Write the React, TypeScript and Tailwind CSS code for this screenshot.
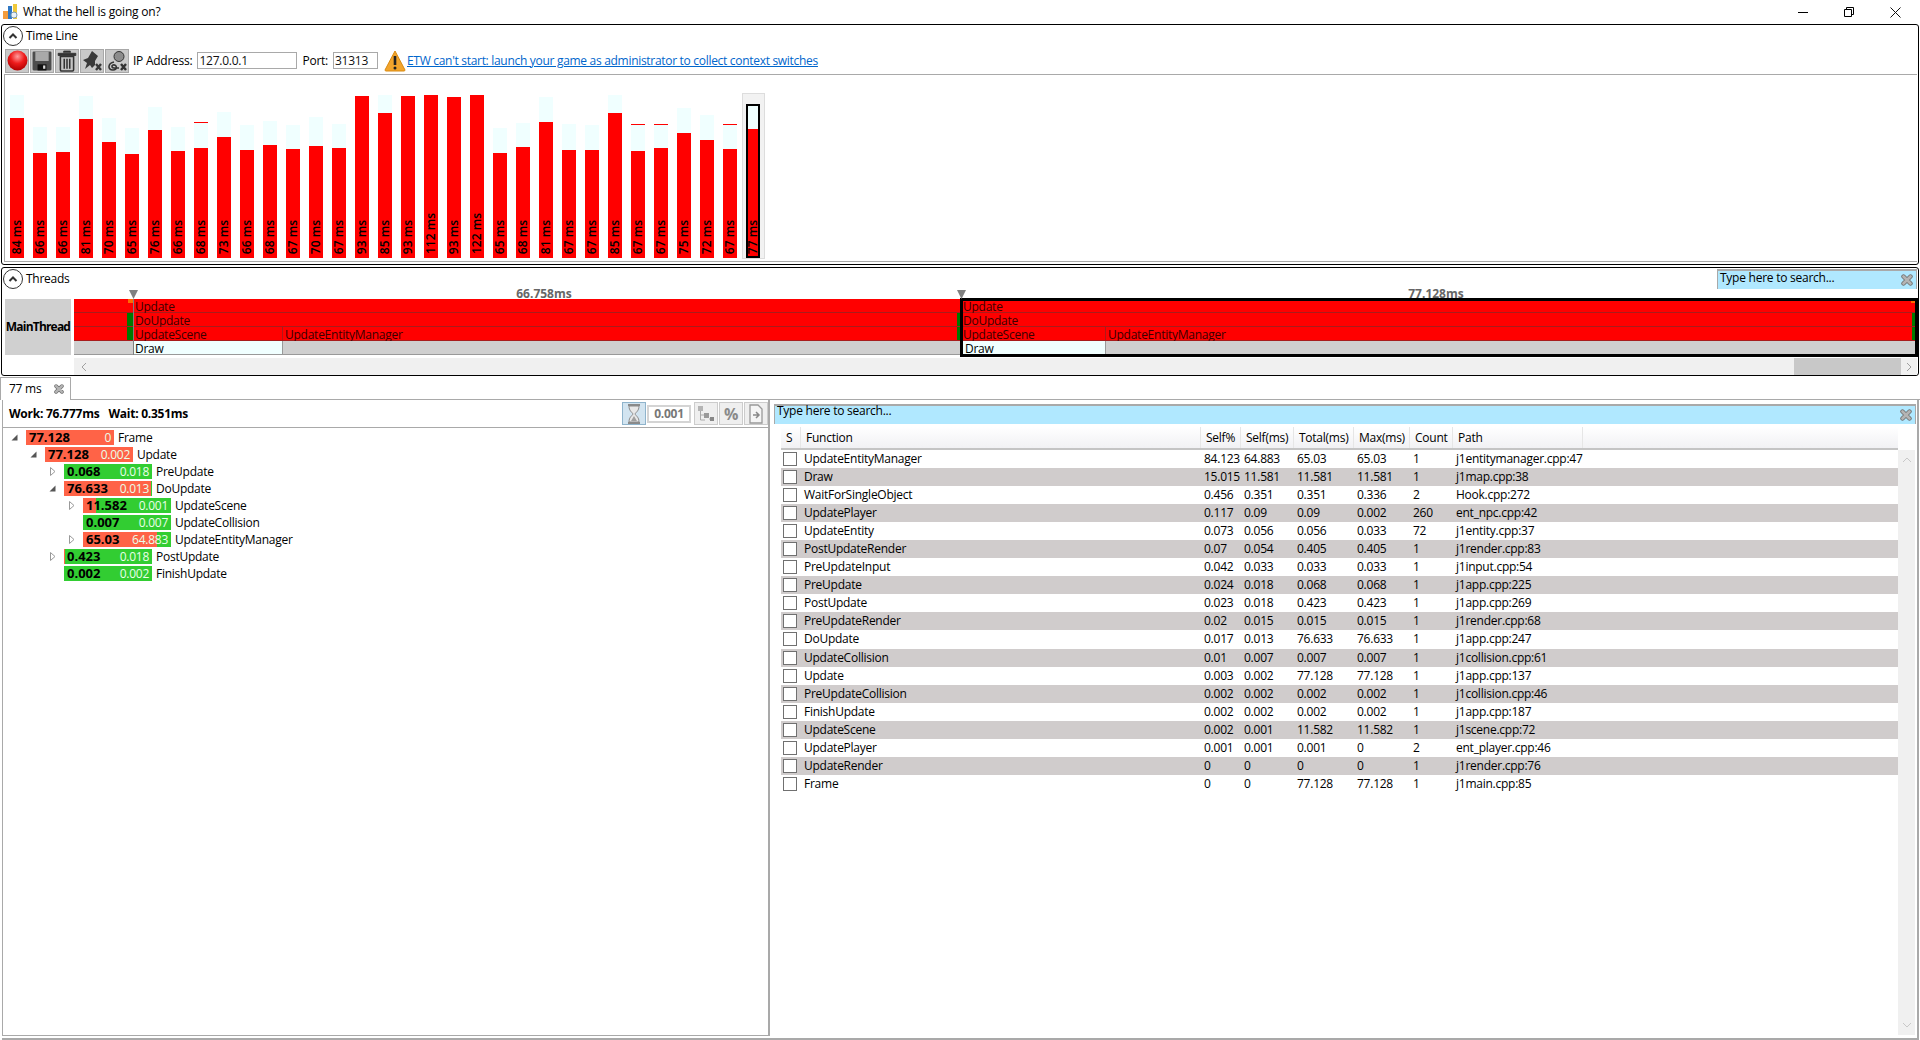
import React from "react";

const bars: [string, number, number, boolean?][] = [
  ["84", 354, 285], ["66", 459, 381], ["66", 456, 381], ["81", 357, 288], ["70", 426, 354], ["65", 462, 384],
  ["76", 390, 321], ["66", 453, 381], ["68", 444, 369, true], ["73", 411, 336], ["66", 450, 375], ["68", 435, 363],
  ["67", 447, 375], ["70", 438, 351], ["67", 444, 372], ["93", 288, 288], ["85", 339, 285], ["93", 288, 288],
  ["112", 285, 285], ["93", 291, 291], ["122", 285, 285], ["65", 459, 384], ["68", 441, 369], ["81", 366, 291],
  ["67", 450, 372], ["67", 450, 375], ["85", 339, 285], ["67", 453, 375, true], ["67", 444, 375, true],
  ["75", 399, 324], ["72", 420, 345], ["67", 447, 375, true],
];

const rows = [
  ["UpdateEntityManager", "84.123", "64.883", "65.03", "65.03", "1", "j1entitymanager.cpp:47"],
  ["Draw", "15.015", "11.581", "11.581", "11.581", "1", "j1map.cpp:38"],
  ["WaitForSingleObject", "0.456", "0.351", "0.351", "0.336", "2", "Hook.cpp:272"],
  ["UpdatePlayer", "0.117", "0.09", "0.09", "0.002", "260", "ent_npc.cpp:42"],
  ["UpdateEntity", "0.073", "0.056", "0.056", "0.033", "72", "j1entity.cpp:37"],
  ["PostUpdateRender", "0.07", "0.054", "0.405", "0.405", "1", "j1render.cpp:83"],
  ["PreUpdateInput", "0.042", "0.033", "0.033", "0.033", "1", "j1input.cpp:54"],
  ["PreUpdate", "0.024", "0.018", "0.068", "0.068", "1", "j1app.cpp:225"],
  ["PostUpdate", "0.023", "0.018", "0.423", "0.423", "1", "j1app.cpp:269"],
  ["PreUpdateRender", "0.02", "0.015", "0.015", "0.015", "1", "j1render.cpp:68"],
  ["DoUpdate", "0.017", "0.013", "76.633", "76.633", "1", "j1app.cpp:247"],
  ["UpdateCollision", "0.01", "0.007", "0.007", "0.007", "1", "j1collision.cpp:61"],
  ["Update", "0.003", "0.002", "77.128", "77.128", "1", "j1app.cpp:137"],
  ["PreUpdateCollision", "0.002", "0.002", "0.002", "0.002", "1", "j1collision.cpp:46"],
  ["FinishUpdate", "0.002", "0.002", "0.002", "0.002", "1", "j1app.cpp:187"],
  ["UpdateScene", "0.002", "0.001", "11.582", "11.582", "1", "j1scene.cpp:72"],
  ["UpdatePlayer", "0.001", "0.001", "0.001", "0", "2", "ent_player.cpp:46"],
  ["UpdateRender", "0", "0", "0", "0", "1", "j1render.cpp:76"],
  ["Frame", "0", "0", "77.128", "77.128", "1", "j1main.cpp:85"],
];

type Node = { level: number; exp: "open" | "closed" | ""; total: string; self: string; name: string; red: number };
const tree: Node[] = [
  { level: 0, exp: "open", total: "77.128", self: "0", name: "Frame", red: 88 },
  { level: 1, exp: "open", total: "77.128", self: "0.002", name: "Update", red: 88 },
  { level: 2, exp: "closed", total: "0.068", self: "0.018", name: "PreUpdate", red: 0 },
  { level: 2, exp: "open", total: "76.633", self: "0.013", name: "DoUpdate", red: 87 },
  { level: 3, exp: "closed", total: "11.582", self: "0.001", name: "UpdateScene", red: 13 },
  { level: 3, exp: "", total: "0.007", self: "0.007", name: "UpdateCollision", red: 0 },
  { level: 3, exp: "closed", total: "65.03", self: "64.883", name: "UpdateEntityManager", red: 74 },
  { level: 2, exp: "closed", total: "0.423", self: "0.018", name: "PostUpdate", red: 1 },
  { level: 2, exp: "", total: "0.002", self: "0.002", name: "FinishUpdate", red: 0 },
];

type Seg = { w: number; c: string; t?: string };
const F = "bg-[#ff0000]";
const R = "bg-[#ff0000] border-r border-[#b01818]";
const G = "bg-[#007a00]";
const P = "bg-[#f0ffff] border-r border-[#999999]";
const A = "bg-[#cfcfcf]";
const rowSegs: Seg[][] = [
  [
    { w: 54, c: F }, { w: 5, c: "bg-[linear-gradient(to_bottom,#ff6a00_4px,#ff0000_4px)]" }, { w: 825, c: F, t: "Update" },
    { w: 3, c: F }, { w: 950, c: F, t: "Update" }, { w: 4, c: "bg-[linear-gradient(to_bottom,#ff6a00_4px,#ff0000_4px)]" },
  ],
  [
    { w: 53, c: F }, { w: 6, c: G }, { w: 824, c: F, t: "DoUpdate" }, { w: 4, c: G },
    { w: 951, c: F, t: "DoUpdate" }, { w: 5, c: G },
  ],
  [
    { w: 53, c: F }, { w: 6, c: G }, { w: 150, c: R, t: "UpdateScene" }, { w: 674, c: F, t: "UpdateEntityManager" },
    { w: 4, c: G }, { w: 145, c: R, t: "UpdateScene" }, { w: 806, c: F, t: "UpdateEntityManager" }, { w: 5, c: G },
  ],
  [
    { w: 59, c: A }, { w: 150, c: P, t: "Draw" }, { w: 680, c: A }, { w: 143, c: P, t: "Draw" }, { w: 811, c: A },
  ],
];

function Chevron() {
  return (
    <div className="w-[20px] h-[20px] rounded-full border border-[#333333] flex items-center justify-center shrink-0">
      <svg width="10" height="8" viewBox="0 0 10 8"><path d="M1.5 6 L5 2.5 L8.5 6" fill="none" stroke="#333" strokeWidth="2" /></svg>
    </div>
  );
}

function CloseX({ size = 12 }: { size?: number }) {
  return (
    <svg width={size} height={size} viewBox="0 0 12 12" className="shrink-0">
      <path d="M2.5 2.5 L9.5 9.5 M9.5 2.5 L2.5 9.5" stroke="#6f6f6f" strokeWidth="4.4" strokeLinecap="round" />
      <path d="M2.5 2.5 L9.5 9.5 M9.5 2.5 L2.5 9.5" stroke="#b4b4b4" strokeWidth="2.8" strokeLinecap="round" />
    </svg>
  );
}

function ToolBtn({ children }: { children: React.ReactNode }) {
  return (
    <div className="w-[24px] h-[24px] bg-[#c9c9c9] border border-[#a8a8a8] flex items-center justify-center shrink-0">{children}</div>
  );
}

function Search({ cls, txt }: { cls: string; txt: string }) {
  return (
    <div className={`flex justify-between bg-[#b0e8ff] border-t-2 border-l border-r border-[#a9a9a9] pl-[2px] pr-[3px] text-black ${cls}`}>
      <span className={`leading-[14px] ${txt}`}>Type here to search...</span>
      <div className="mt-[3px]"><CloseX /></div>
    </div>
  );
}

function Expander({ kind }: { kind: string }) {
  if (kind === "open")
    return <svg width="7" height="7" viewBox="0 0 7 7"><path d="M6.5 0.5 V6.5 H0.5 Z" fill="#555" /></svg>;
  if (kind === "closed")
    return <svg width="6" height="9" viewBox="0 0 6 9"><path d="M0.5 0.5 L5 4.5 L0.5 8.5 Z" fill="#fff" stroke="#999" /></svg>;
  return null;
}

export default function App() {
  return (
    <div className="w-[1920px] h-[1040px] overflow-hidden bg-white flex flex-col font-['Open_Sans',sans-serif] text-[12px] text-[#111111] tracking-[-0.25px]">
      {/* title bar */}
      <div className="h-[24px] flex items-center shrink-0 relative">
        <svg width="16" height="17" viewBox="0 0 16 17" className="ml-[3px] mr-[4px] mb-[1px]">
          <rect x="0" y="8" width="5" height="8" fill="#f39c3d" />
          <rect x="5" y="3" width="4" height="13" fill="#2f78c4" />
          <rect x="10" y="1" width="4" height="15" fill="#f0c93a" />
          <circle cx="11" cy="12" r="3" fill="#e8f1f8" stroke="#7a9ab8" />
        </svg>
        <span className="text-[12px] text-black tracking-[-0.2px]">What the hell is going on?</span>
        <div className="ml-auto flex items-center mr-[19px]">
          <div className="w-[10px] h-[1px] bg-black mr-[36px]" />
          <svg width="10" height="10" viewBox="0 0 10 10" className="mr-[36px]">
            <path d="M0.5 2.5 H7.5 V9.5 H0.5 Z M2.5 2.5 V0.5 H9.5 V7.5 H7.5" fill="none" stroke="#000" />
          </svg>
          <svg width="11" height="11" viewBox="0 0 11 11"><path d="M0.5 0.5 L10.5 10.5 M10.5 0.5 L0.5 10.5" stroke="#111" /></svg>
        </div>
      </div>

      {/* Time Line */}
      <div className="h-[241px] mx-[1px] border border-black rounded-[3px] flex flex-col shrink-0">
        <div className="h-[22px] flex items-center pl-[1px] gap-[3px] shrink-0 text-black">
          <Chevron />
          <span>Time Line</span>
        </div>
        <div className="h-[26px] flex items-center pl-[3px] shrink-0 pt-[1px]">
          <div className="flex gap-[1px]">
            <ToolBtn>
              <svg width="21" height="21" viewBox="0 0 20 20">
                <defs>
                  <radialGradient id="rec" cx="50%" cy="30%" r="70%"><stop offset="0" stopColor="#ff9c9c" /><stop offset="0.5" stopColor="#ee1c1c" /><stop offset="1" stopColor="#b00000" /></radialGradient>
                </defs>
                <circle cx="10" cy="10" r="9.5" fill="url(#rec)" />
              </svg>
            </ToolBtn>
            <ToolBtn>
              <svg width="20" height="20" viewBox="0 0 18 18">
                <rect x="0.5" y="0.5" width="17" height="17" rx="1" fill="#4d4d4d" />
                <rect x="3" y="0.5" width="12" height="8.5" fill="#a9a9a9" />
                <rect x="5" y="12" width="8" height="5.5" fill="#111" />
                <rect x="10" y="13" width="2" height="3" fill="#ddd" />
              </svg>
            </ToolBtn>
            <ToolBtn>
              <svg width="20" height="22" viewBox="0 0 18 20">
                <path d="M6 2.5 V1 H12 V2.5 M1 3 H17 V5 H1 Z" fill="#333" stroke="#333" strokeWidth="0.8" />
                <path d="M3 6 H15 V18 Q15 19 14 19 H4 Q3 19 3 18 Z" fill="#c4c4c4" stroke="#333" strokeWidth="1.4" />
                <path d="M6.5 8 V17 M9 8 V17 M11.5 8 V17" stroke="#333" strokeWidth="1.4" />
              </svg>
            </ToolBtn>
            <ToolBtn>
              <svg width="22" height="22" viewBox="0 0 22 22">
                <path d="M11 1 L17 6 L14 11 L14 15 L11 18 L9 15 L4 19 L6 13 L2 10 L7 8 Z" fill="#3a3a3a" />
                <path d="M15 14 L20 20 M20 14 L15 20" stroke="#3a3a3a" strokeWidth="2.4" />
              </svg>
            </ToolBtn>
            <ToolBtn>
              <svg width="22" height="22" viewBox="0 0 22 22">
                <circle cx="13" cy="6.5" r="5" fill="#8c8c8c" stroke="#333" />
                <path d="M8 12 C2 13 1 20 7 20 C12 20 11 14 7 15 C5 16 6 18 8 18 L13 18" fill="none" stroke="#333" strokeWidth="1.6" />
                <path d="M15 14 L20 20 M20 14 L15 20" stroke="#333" strokeWidth="2.4" />
              </svg>
            </ToolBtn>
          </div>
          <span className="ml-[4px] text-black">IP Address:</span>
          <div className="ml-[5px] w-[100px] h-[17px] border border-[#a9a9a9] pl-[1px] leading-[15px]">127.0.0.1</div>
          <span className="ml-[5px] text-black">Port:</span>
          <div className="ml-[5px] w-[45px] h-[17px] border border-[#a9a9a9] pl-[1px] leading-[15px]">31313</div>
          <svg width="22" height="22" viewBox="0 0 22 22" className="ml-[6px]">
            <path d="M11 1 L21 20 Q21 21 20 21 H2 Q1 21 1 20 Z" fill="#f2a42c" stroke="#d98a10" />
            <path d="M11 6 V15" stroke="#222" strokeWidth="2.6" />
            <circle cx="11" cy="18" r="1.5" fill="#222" />
          </svg>
          <a className="ml-[1px] text-[#0066cc] underline tracking-[-0.3px]" href="#">ETW can't start: launch your game as administrator to collect context switches</a>
        </div>
        <div className="h-[188px] mt-[1px] ml-[2px] mr-[1px] border-t border-b border-l border-[#a9a9a9] flex items-end pl-[5px] gap-[9px] shrink-0">
          {bars.map(([t, redTop, paleTop, dash], i) => (
            <div key={i} className="w-[14px] flex flex-col mb-[3px] shrink-0">
              {dash && <div className="h-[1px] bg-[#ff0000]" />}
              {paleTop < redTop && <div className="bg-[#f0ffff]" style={{ height: (redTop - paleTop) / 3 }} />}
              <div className="bg-[#ff0000] flex flex-col justify-end items-center pb-[4px]" style={{ height: 258 - redTop / 3 }}>
                <span className="[writing-mode:vertical-rl] rotate-180 text-black font-semibold leading-[14px] tracking-[0px] whitespace-nowrap">{t} ms</span>
              </div>
            </div>
          ))}
          <div className="w-[23px] h-[166px] ml-[-4px] mb-[2px] bg-[#f2f2f2] border border-[#dddddd] pl-[3px] pr-[4px] flex flex-col justify-end shrink-0">
            <div className="h-[154px] border-2 border-black flex flex-col">
              <div className="h-[23px] bg-[#f0ffff]" />
              <div className="flex-1 bg-[#ff0000] flex flex-col justify-end items-center pb-[2px]">
                <span className="[writing-mode:vertical-rl] rotate-180 text-black font-semibold leading-[10px] tracking-[0px] whitespace-nowrap">77 ms</span>
              </div>
            </div>
          </div>
        </div>
      </div>

      {/* Threads */}
      <div className="h-[109px] mx-[1px] mt-[2px] border border-black rounded-[3px] flex flex-col shrink-0">
        <div className="h-[22px] flex items-center pl-[1px] gap-[3px] shrink-0 text-black">
          <Chevron />
          <span>Threads</span>
          <Search cls="ml-auto w-[200px] h-[20px] mr-[1px]" txt="" />
        </div>
        <div className="h-[56px] mt-[9px] flex shrink-0 ml-[3px] mr-[1px]">
          <div className="w-[66px] mr-[3px] bg-[#d0d0d0] font-bold text-black flex items-center justify-center shrink-0 tracking-[-0.8px]">MainThread</div>
          <div className="relative flex-1 flex flex-col">
            {rowSegs.map((segs, r) => (
              <div key={r} className={`h-[14px] flex ${r < 3 ? "border-b border-[#a81c1c]" : "border-b border-[#999999]"}`}>
                {segs.map((s, i) => (
                  <div key={i} className={`${s.c} shrink-0 pl-[2px] h-[13px] whitespace-nowrap ${r === 3 ? "text-black" : "text-[#3a0000]"}`} style={{ width: s.w }}>
                    {s.t && <span className="block leading-[15px]">{s.t}</span>}
                  </div>
                ))}
              </div>
            ))}
            <div className="absolute left-[886px] right-[-1px] top-[-1px] h-[59px] border-[3px] border-black" />
            <div className="absolute left-[59px] top-0 bottom-0 w-[1px] bg-[#808080]" />
            <svg width="9" height="9" viewBox="0 0 9 9" className="absolute left-[55px] top-[-9px]"><path d="M0 0 H9 L4.5 9 Z" fill="#808080" /></svg>
            <svg width="9" height="9" viewBox="0 0 9 9" className="absolute left-[883px] top-[-9px]"><path d="M0 0 H9 L4.5 9 Z" fill="#808080" /></svg>
            <div className="absolute left-[60px] w-[820px] top-[-12px] text-center font-bold text-[#666666] leading-[14px] tracking-normal">66.758ms</div>
            <div className="absolute left-[889px] w-[946px] top-[-12px] text-center font-bold text-[#666666] leading-[14px] tracking-normal">77.128ms</div>
          </div>
        </div>
        <div className="h-[17px] mt-[3px] ml-[72px] mr-[1px] bg-[#f0f0f0] flex items-center shrink-0">
          <svg width="6" height="10" viewBox="0 0 6 10" className="ml-[7px]"><path d="M5 1 L1 5 L5 9" fill="none" stroke="#a0a0a0" /></svg>
          <div className="ml-auto w-[107px] h-full bg-[#c8c8c8]" />
          <svg width="6" height="10" viewBox="0 0 6 10" className="ml-[5px] mr-[5px]"><path d="M1 1 L5 5 L1 9" fill="none" stroke="#a0a0a0" /></svg>
        </div>
      </div>

      {/* tab strip */}
      <div className="h-[23px] mt-[1px] flex items-end shrink-0 border-b border-[#a9a9a9]">
        <div className="w-[71px] h-[23px] -mb-[1px] border border-[#a9a9a9] border-b-0 bg-white flex items-center pl-[8px] text-black">
          <span>77 ms</span>
          <div className="ml-[13px]"><CloseX size={10} /></div>
        </div>
      </div>

      {/* bottom */}
      <div className="flex-1 flex min-h-0 ml-[2px] mr-[1px] border-r-2 border-b-2 border-[#a9a9a9]">
        <div className="w-[768px] mb-[2px] border-l border-r-2 border-b border-[#a9a9a9] flex flex-col shrink-0">
          <div className="h-[28px] flex items-center border-b border-[#a9a9a9] shrink-0 pl-[6px]">
            <span className="font-bold text-black">Work: 76.777ms</span>
            <span className="font-bold text-black ml-[9px]">Wait: 0.351ms</span>
            <div className="ml-auto flex items-center gap-[1px]">
              <div className="w-[24px] h-[23px] bg-[#d2e4f0] border border-[#8fb4cc] flex items-center justify-center">
                <svg width="16" height="20" viewBox="0 0 16 20">
                  <path d="M2 1 H14 M2 19 H14" stroke="#8a8a8a" strokeWidth="2" />
                  <path d="M3 2 C3 7 6 8 7 10 C6 12 3 13 3 18 H13 C13 13 10 12 9 10 C10 8 13 7 13 2 Z" fill="#e8e8e8" stroke="#8a8a8a" />
                  <path d="M5 17 L8 12 L11 17 Z" fill="#a0a0a0" />
                </svg>
              </div>
              <div className="w-[44px] h-[18px] border-2 border-[#d4d4d4] text-[#777777] font-bold text-center leading-[14px]">0.001</div>
              <div className="w-[24px] h-[23px] ml-[2px] bg-[#efefef] border border-[#cccccc] flex items-center justify-center">
                <svg width="18" height="18" viewBox="0 0 18 18">
                  <rect x="1" y="1" width="5" height="5" fill="#b4b4b4" />
                  <rect x="7" y="8" width="5" height="5" fill="#9a9a9a" />
                  <rect x="13" y="12" width="4" height="4" fill="#888" />
                  <path d="M3.5 6 V15 H8 M3.5 10 H7 M12 14 H13" fill="none" stroke="#aaa" />
                </svg>
              </div>
              <div className="w-[24px] h-[23px] bg-[#efefef] border border-[#cccccc] flex items-center justify-center text-[#8a8a8a] font-bold text-[16px]">%</div>
              <div className="w-[24px] h-[23px] bg-[#efefef] border border-[#cccccc] flex items-center justify-center">
                <svg width="16" height="20" viewBox="0 0 16 20">
                  <path d="M2 1 H10 L14 5 V19 H2 Z" fill="#f5f5f5" stroke="#999" strokeWidth="1.3" />
                  <path d="M5 11 H10 M8 8 L11 11 L8 14" fill="none" stroke="#888" strokeWidth="1.5" />
                </svg>
              </div>
            </div>
          </div>
          <div className="pt-[1px] flex flex-col">
            {tree.map((n, i) => (
              <div key={i} className="h-[17px] flex items-center text-black" style={{ paddingLeft: 8 + n.level * 19 }}>
                <div className="w-[15px] pr-[8px] flex justify-center shrink-0"><Expander kind={n.exp} /></div>
                <div className="relative w-[88px] h-[15px] bg-[#32cd32] shrink-0 flex items-center justify-between px-[3px]">
                  <div className="absolute left-0 top-0 bottom-0 bg-[#ff6347]" style={{ width: n.red }} />
                  <span className="relative font-bold text-[13px] text-black tracking-normal">{n.total}</span>
                  <span className="relative text-[#eaffea]">{n.self}</span>
                </div>
                <span className="ml-[4px]">{n.name}</span>
              </div>
            ))}
          </div>
        </div>

        <div className="flex-1 min-w-0 flex flex-col">
          <Search cls="ml-[4px] mt-[4px] h-[20px] shrink-0 mr-[1px]" txt="mt-[-2px]" />
          <div className="flex flex-1 min-h-0 ml-[11px] mr-[1px] mt-[3px]">
            <div className="w-[1117px] shrink-0 flex flex-col">
              <div className="h-[23px] bg-gradient-to-b from-white to-[#f1f1f4] border-b-2 border-[#c4c4c4] grid grid-cols-[20px_400px_40px_53px_60px_56px_43px_130px] shrink-0 text-black">
                {["S", "Function", "Self%", "Self(ms)", "Total(ms)", "Max(ms)", "Count", "Path"].map((h) => (
                  <div key={h} className="pl-[5px] border-r border-[#e6e6e6] leading-[20px] pt-[1px]">{h}</div>
                ))}
              </div>
              {rows.map((r, i) => (
                <div key={i} className={`h-[18.06px] grid grid-cols-[20px_400px_40px_53px_60px_56px_43px_1fr] items-center ${i % 2 ? "bg-[#d0cccc]" : "bg-white"} text-black`}>
                  <div className="pl-[2px]"><div className="w-[14px] h-[14px] border border-[#707070] bg-white" /></div>
                  {r.map((c, j) => (
                    <div key={j} className="pl-[3px] whitespace-nowrap">{c}</div>
                  ))}
                </div>
              ))}
            </div>
            <div className="w-[17px] mt-[23px] mb-[3px] bg-[#f0f0f0] flex flex-col justify-between items-center py-[7px] shrink-0">
              <svg width="10" height="6" viewBox="0 0 10 6"><path d="M1 5 L5 1 L9 5" fill="none" stroke="#c8c8c8" /></svg>
              <svg width="10" height="6" viewBox="0 0 10 6"><path d="M1 1 L5 5 L9 1" fill="none" stroke="#c8c8c8" /></svg>
            </div>
          </div>
        </div>
      </div>
    </div>
  );
}
